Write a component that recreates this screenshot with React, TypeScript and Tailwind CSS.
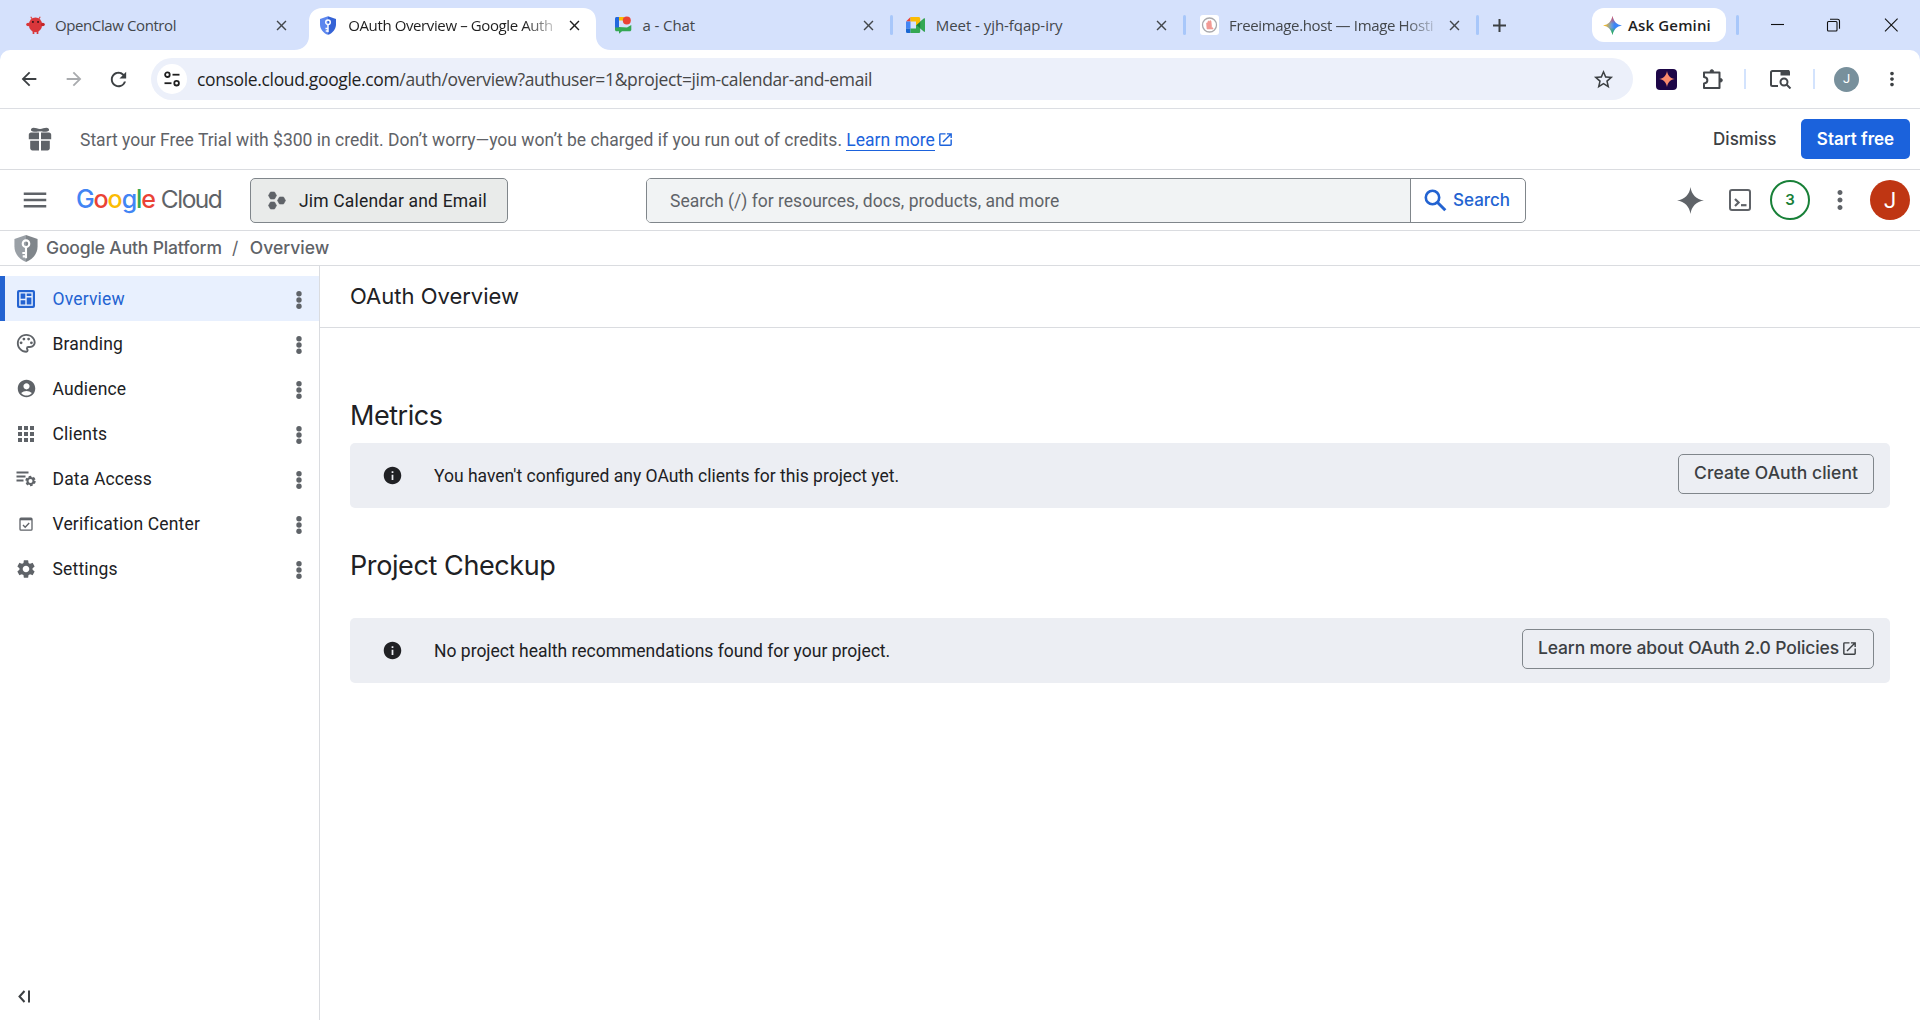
import React from 'react';
import {
  MdAccountCircle,
  MdApps,
  MdArrowBack,
  MdArrowForward,
  MdClose,
  MdInfo,
  MdMenu,
  MdMoreVert,
  MdOpenInNew,
  MdOutlinePalette,
  MdOutlineStarBorder,
  MdRefresh,
  MdSettings,
} from 'react-icons/md';

const segoe = "font-['Open_Sans','Noto_Sans',sans-serif]";
const gsans = "font-['Inter','Roboto',sans-serif]";
const roboto = "font-['Roboto',sans-serif]";

const ClawIcon = () => (
  <svg width="19" height="19" viewBox="0 0 20 20">
    <path d="M6.500 3 5 .8M13.500 3 15 .8" stroke="#e0433f" strokeWidth="1.200" />
    <path d="M7 15v4h1.800v-4zM11.200 15v4H13v-4z" fill="#d9363a" />
    <ellipse cx="10" cy="9.300" rx="7" ry="7.800" fill="#d9363a" />
    <ellipse cx="2.300" cy="9" rx="2.100" ry="1.800" fill="#d9363a" />
    <ellipse cx="17.700" cy="9" rx="2.100" ry="1.800" fill="#c42428" />
    <circle cx="7.300" cy="6.200" r="1" fill="#1c1014" />
    <circle cx="12.700" cy="6.200" r="1" fill="#1c1014" />
  </svg>
);

const ShieldIcon = ({ left, right, width, height }: { left: string; right: string; width: number; height: number }) => (
  <svg width={width} height={height} viewBox="0 0 24 28" className="shrink-0">
    <path d="M12 0 0 4.200V12c0 7.400 5 13.400 12 16z" fill={left} />
    <path d="M12 0l12 4.200V12c0 7.400-5 13.400-12 16z" fill={right} />
    <circle cx="12" cy="9" r="3.400" fill="none" stroke="#fff" strokeWidth="2.200" />
    <path d="M12 12.500V24M12 18.600H8.200M12 22.200H8.600" stroke="#fff" strokeWidth="2.200" fill="none" />
  </svg>
);

const ChatIcon = () => (
  <svg width="18" height="18" viewBox="0 0 18 18">
    <path d="M2.500 1H5v12H1V2.500C1 1.700 1.700 1 2.500 1z" fill="#2268dd" />
    <path d="M5 1h5v3.500H5z" fill="#fbbc04" />
    <path d="M1 11.500h4V11l8 .5L17.300 9v4.700c0 .9-.6 1.500-1.500 1.500H8L5 17.800v-2.600H2.500c-.8 0-1.500-.6-1.500-1.500z" fill="#34a853" />
    <circle cx="12.800" cy="4.600" r="4" fill="#ea4335" />
  </svg>
);

const MeetIcon = () => (
  <svg width="19" height="16" viewBox="0 0 19 16">
    <path d="M4.500 0v4.500H0z" fill="#ea4335" />
    <path d="M4.500 0h8c1 0 1.700.7 1.700 1.600V8H10V4.500H4.500z" fill="#fbbc04" />
    <path d="M0 4.500h4.500v7H0z" fill="#4285f4" />
    <path d="M0 11.500h4.500V16H1.600C.7 16 0 15.300 0 14.400z" fill="#1967d2" />
    <path d="M4.500 11.500H10V8h4.200v6.400c0 .9-.7 1.600-1.700 1.600h-8z" fill="#34a853" />
    <path d="M10.500 8 18 1.600c.4-.3 1 0 1 .5v11.800c0 .5-.6.8-1 .5z" fill="#188038" />
    <path d="M14.200 4.800 18 1.600c.4-.3 1 0 1 .5v11.800c0 .5-.6.8-1 .5l-3.800-3.200z" fill="#34a853" />
  </svg>
);

const ImageHostIcon = () => (
  <svg width="19" height="20" viewBox="0 0 19 20">
    <rect width="19" height="20" rx="3" fill="#fff" />
    <circle cx="9.500" cy="10" r="7" fill="none" stroke="#a9a9ad" strokeWidth="1.300" />
    <path d="M6.500 8 8 7.500V6h1v1l1-1.500 1 .5.700 6.500 1.300.5v1h-6z" fill="#f29a94" stroke="#f29a94" strokeWidth=".6" />
  </svg>
);

const Spark = ({ size, fill }: { size: number; fill: string }) => (
  <svg width={size} height={size} viewBox="0 0 24 24">
    <path d="M12 0c.9 6.800 5.200 11.100 12 12-6.800.9-11.100 5.200-12 12-.9-6.800-5.200-11.100-12-12C6.800 11.100 11.100 6.800 12 0z" fill={fill} />
  </svg>
);

const GeminiIcon = () => (
  <svg width="19" height="19" viewBox="0 0 24 24">
    <defs>
      <linearGradient id="gem" x1="0" y1="12" x2="24" y2="12" gradientUnits="userSpaceOnUse">
        <stop offset=".1" stopColor="#f6b91f" />
        <stop offset=".45" stopColor="#6a9bd8" />
        <stop offset=".6" stopColor="#3b86f7" />
      </linearGradient>
      <linearGradient id="gemTop" x1="12" y1="0" x2="12" y2="24" gradientUnits="userSpaceOnUse">
        <stop offset="0" stopColor="#f0434a" />
        <stop offset=".42" stopColor="#f0434a" stopOpacity="0" />
        <stop offset=".6" stopColor="#2bb24c" stopOpacity="0" />
        <stop offset=".9" stopColor="#2bb24c" />
      </linearGradient>
    </defs>
    <path d="M12 0c1 6.500 5.500 11 12 12-6.500 1-11 5.500-12 12-1-6.500-5.500-11-12-12C6.500 11 11 6.500 12 0z" fill="url(#gem)" />
    <path d="M12 0c1 6.500 5.500 11 12 12-6.500 1-11 5.500-12 12-1-6.500-5.500-11-12-12C6.500 11 11 6.500 12 0z" fill="url(#gemTop)" />
  </svg>
);

const tabs = [
  { title: 'OpenClaw Control', icon: <ClawIcon />, tracking: 'tracking-[-0.4px]' },
  {
    title: 'OAuth Overview – Google Auth',
    icon: <ShieldIcon left="#5c86ee" right="#3563d6" width={16} height={19} />,
    tracking: 'tracking-[-0.39px]',
    active: true,
    faded: true,
  },
  { title: 'a - Chat', icon: <ChatIcon />, tracking: 'tracking-[-0.1px]', divider: true },
  { title: 'Meet - yjh-fqap-iry', icon: <MeetIcon />, tracking: 'tracking-[-0.05px]', divider: true },
  { title: 'Freeimage.host — Image Hosti', icon: <ImageHostIcon />, tracking: 'tracking-[-0.35px]', divider: true, faded: true },
];

const TabStrip = () => (
  <div className="flex h-[50px] bg-[#d5e1fc] pl-[15px]">
    {tabs.map((tab) => (
      <div key={tab.title} className="relative h-[50px] w-[293.25px] shrink-0">
        {tab.active && (
          <svg className="absolute top-2 -left-3.5" width="317" height="42" viewBox="0 0 317 42">
            <path d="M0 42C9 42 15 36 15 28V13C15 5 21 0 28 0H289C297 0 302 5 302 13V28C302 36 308 42 317 42z" fill="#fff" />
          </svg>
        )}
        <div className={`relative flex h-[50px] items-center ${tab.divider ? 'pl-[11px]' : 'pl-[10px]'}`}>
          <span className="flex w-5 shrink-0 justify-center">{tab.icon}</span>
          <span className={`ml-[10px] flex shrink-0 ${tab.divider ? 'w-[208px]' : 'w-[209px]'}`}>
            <span
              className={`${segoe} whitespace-nowrap text-[15px] leading-5 ${tab.tracking} ${
                tab.active ? 'text-[#1f1f1f]' : 'text-[#43474b]'
              } ${tab.faded ? '[mask-image:linear-gradient(to_right,#000_86%,rgb(0_0_0/.25))]' : ''}`}
            >
              {tab.title}
            </span>
          </span>
          <MdClose className={`ml-[9px] shrink-0 text-[17px] ${tab.active ? 'text-[#1f1f1f]' : 'text-[#43474b]'}`} />
        </div>
        {tab.divider && <div className="absolute top-[15px] right-[2px] h-5 w-[3px] rounded-full bg-[#a8c7fa]" />}
      </div>
    ))}
    <div className="flex flex-1 items-center">
      <svg width="15" height="15" viewBox="0 0 15 15" className="ml-[11px]">
        <path d="M7.500 1v13M1 7.500h13" stroke="#3c4043" strokeWidth="2" />
      </svg>
      <div className="ml-[84.75px] flex h-[34px] w-[134px] items-center rounded-[12px] bg-white pl-[11px]">
        <GeminiIcon />
        <span className={`${segoe} ml-[6px] whitespace-nowrap text-[15px] font-semibold tracking-[0.15px] text-[#1f1f1f]`}>Ask Gemini</span>
      </div>
      <div className="ml-[10px] h-5 w-[3px] rounded-full bg-[#a8c7fa]" />
      <svg width="130" height="14" viewBox="0 0 130 14" className="ml-[32px]" fill="none" stroke="#111" strokeWidth="1.100">
        <path d="M0 6.500h13" />
        <rect x="56.500" y="3.500" width="9.500" height="9.500" rx="1" />
        <path d="M59 1.200h7.500a2 2 0 0 1 2 2v7.500" />
        <path d="M114 .7l12.600 12.600M126.600.7 114 13.300" />
      </svg>
    </div>
  </div>
);

const Toolbar = () => (
  <div className="h-[59px] bg-[#d5e1fc]">
    <div className="flex h-[59px] items-center rounded-t-[10px] border-b border-[#dcdee3] bg-white pl-[17.5px]">
      <MdArrowBack className="text-[22px] text-[#3c4043]" />
      <MdArrowForward className="ml-[23.5px] text-[22px] text-[#a9abae]" />
      <MdRefresh className="ml-[22px] text-[23px] text-[#3c4043]" />
      <div className="ml-[21px] flex h-[42px] w-[1482px] items-center rounded-full bg-[#ecf0fa] pl-[6px]">
        <span className="flex size-[30px] items-center justify-center rounded-full bg-white">
          <svg width="16" height="16" viewBox="0 0 16 16" fill="none" stroke="#1f1f1f" strokeWidth="1.800">
            <circle cx="3.400" cy="3.700" r="2.300" />
            <path d="M8.500 3.700H15.500" />
            <circle cx="12.600" cy="12.200" r="2.300" />
            <path d="M.5 12.200H7.500" />
          </svg>
        </span>
        <span className={`${segoe} ml-[10px] flex-1 whitespace-nowrap text-[17.500px] leading-6 tracking-[-0.35px] text-[#474747]`}>
          <span className="text-[#1f1f1f]">console.cloud.google.com</span>/auth/overview?authuser=1&amp;project=jim-calendar-and-email
        </span>
        <MdOutlineStarBorder className="mr-[18px] text-[23px] text-[#3c4043]" />
      </div>
      <span className="ml-[23px] flex size-[21px] items-center justify-center rounded-[4px] bg-[#1d0647]">
        <Spark size={16} fill="#f98a6c" />
      </span>
      <svg width="22" height="22" viewBox="0 0 22 22" className="ml-[25px]" fill="none" stroke="#43474b" strokeWidth="2">
        <path d="M2 4.500h15.500v15.500H2v-4.500c4.500-.5 4.500-6 0-6.500z" strokeLinejoin="round" />
        <path d="M8 3.500a1.800 1.800 0 0 1 3.600 0zM18.500 10.500a1.800 1.800 0 0 1 0 3.600z" fill="#43474b" strokeWidth="1" />
      </svg>
      <div className="ml-[20px] h-5 w-[2px] bg-[#d3e3fd]" />
      <svg width="23" height="20" viewBox="0 0 23 20" className="ml-[23px]" fill="none" stroke="#43474b" strokeWidth="2">
        <path d="M9 17H3.500A1.500 1.500 0 0 1 2 15.500v-12A1.500 1.500 0 0 1 3.500 2H20" />
        <path d="M11.500 1H19a2 2 0 0 1 2 2v3.500h-9.500z" fill="#43474b" stroke="none" />
        <circle cx="15" cy="13" r="3.500" />
        <path d="M17.500 15.500 21.500 19.500" />
      </svg>
      <div className="ml-[21px] h-5 w-[2px] bg-[#d3e3fd]" />
      <span className={`${roboto} ml-[19px] flex size-[25px] items-center justify-center rounded-full bg-[#78909c] text-[13px] text-white`}>J</span>
      <MdMoreVert className="ml-[22px] text-[22px] text-[#3c4043]" />
    </div>
  </div>
);

const TrialBanner = () => (
  <div className="flex h-[61px] items-center border-b border-[#dadce0] pr-[10px] pl-[28px]">
    <svg width="24" height="24" viewBox="0 0 24 24" fill="#5f6368">
      <path d="M12 4.200C9.500 4.800 4.200 5.200 3 3.500 2.500 2.200 4 .8 5.500.8 8 .8 9.500 2 12 2s4-1.200 6.500-1.200c1.500 0 3 1.400 2.500 2.700-1.200 1.700-6.500 1.300-9 .7z" />
      <path d="M3 5.500h8v6.800H.8V7.700c0-1.200 1-2.200 2.200-2.200zM13 5.500h8c1.200 0 2.200 1 2.200 2.200v4.600H13zM2.200 13.800H11V23.500H4.400c-1.200 0-2.200-1-2.200-2.200zM13 13.800h8.800v7.500c0 1.200-1 2.200-2.200 2.200H13z" />
    </svg>
    <p className={`${roboto} mt-[2px] ml-[28px] flex-1 whitespace-nowrap text-[17.500px] text-[#5f6368]`}>
      <span>Start your Free Trial with $300 in credit. Don’t worry—you won’t be charged if you run out of credits. </span>
      <a className="border-b border-[#1b62dc] text-[#1b62dc]">Learn more</a>
      <MdOpenInNew className="mb-1 ml-[2px] inline text-[17px] text-[#1b62dc]" />
    </p>
    <span className={`${gsans} mt-[2px] mr-[24.5px] text-[17px] font-medium text-[#3c4043]`}>Dismiss</span>
    <button className={`${gsans} h-10 w-[109px] rounded-[5px] bg-[#1b62dc] pt-[2px] text-[17px] font-semibold text-white`}>Start free</button>
  </div>
);

const GoogleCloudLogo = () => (
  <span className={`${gsans} flex items-baseline text-[25px] leading-8`}>
    <span className="font-medium tracking-[-1.1px]">
      <span className="text-[#4285f4]">G</span>
      <span className="text-[#ea4335]">o</span>
      <span className="text-[#fbbc04]">o</span>
      <span className="text-[#4285f4]">g</span>
      <span className="text-[#34a853]">l</span>
      <span className="text-[#ea4335]">e</span>
    </span>
    <span className="ml-[6px] text-[24.500px] tracking-[-1.500px] text-[#5f6368]">Cloud</span>
  </span>
);

const ConsoleHeader = () => (
  <header className="flex h-[61px] items-center border-b border-[#dadce0] pl-[20px]">
    <MdMenu className="text-[30px] text-[#5f6368]" />
    <div className="mb-[2px] ml-[26px] w-[174px]">
      <GoogleCloudLogo />
    </div>
    <button className="flex h-[45px] w-[258px] items-center rounded-[5px] border border-[#80868b] bg-[#e9ebea] pl-[17px]">
      <svg width="18" height="19" viewBox="0 0 18 19" fill="#5f6368">
        <path d="M2.500 1h4l2 3.500-2 3.500h-4l-2-3.500zM2.500 11h4l2 3.500-2 3.500h-4l-2-3.500zM11.500 6h4l2 3.500-2 3.500h-4l-2-3.500z" stroke="#5f6368" strokeWidth=".6" />
      </svg>
      <span className={`${roboto} mt-[2px] ml-[13px] whitespace-nowrap text-[17.500px] tracking-[0.17px] text-[#202124]`}>Jim Calendar and Email</span>
    </button>
    <div className="ml-[138px] flex h-[45px] w-[880px] overflow-hidden rounded-[5px] border border-[#80868b]">
      <div className={`${roboto} flex w-[764px] items-center border-r border-[#80868b] bg-[#f1f3f4] pl-[23px] text-[17.500px] text-[#5f6368]`}>
        <span className="mt-[2px]">Search (/) for resources, docs, products, and more</span>
      </div>
      <div className="flex items-center pl-[13px] text-[#2363d1]">
        <svg width="23" height="23" viewBox="0 0 23 23" fill="none" stroke="#2363d1">
          <circle cx="8.500" cy="8.500" r="6.700" strokeWidth="2.600" />
          <path d="M13.300 13.300 21.300 21.300" strokeWidth="3" />
        </svg>
        <span className={`${gsans} mt-[2px] ml-[6px] text-[17px] font-medium`}>Search</span>
      </div>
    </div>
    <div className="flex flex-1 items-center justify-end pr-[10px] text-[#5f6368]">
      <Spark size={27} fill="#5f6368" />
      <svg width="24" height="24" viewBox="0 0 24 24" className="ml-[24px]" fill="none" stroke="#5f6368">
        <rect x="2" y="2" width="20" height="20" rx="2" strokeWidth="2" />
        <path d="M7 11l3.600 3.500L7 18" strokeWidth="2.200" />
        <path d="M13 17.200h5.500" strokeWidth="2.200" />
      </svg>
      <span className={`${gsans} ml-[18px] flex size-10 items-center justify-center rounded-full border-[2.500px] border-[#188038] text-[15px] font-semibold text-[#188038]`}>3</span>
      <MdMoreVert className="ml-[15px] text-[30px]" />
      <span className={`${roboto} ml-[15px] flex size-10 items-center justify-center rounded-full bg-[#bf3613] text-[22px] text-white`}>J</span>
    </div>
  </header>
);

const Breadcrumb = () => (
  <div className={`${gsans} flex h-[35px] items-center border-b border-[#dadce0] pl-[14px] text-[17.500px] font-medium text-[#5f6368]`}>
    <ShieldIcon left="#9aa0a6" right="#80868b" width={24} height={27} />
    <span className="ml-[8px] w-[176px] whitespace-nowrap tracking-[-0.15px]">Google Auth Platform</span>
    <span className="ml-[10px] font-normal">/</span>
    <span className="ml-[11.5px]">Overview</span>
  </div>
);

const OverviewIcon = () => (
  <svg width="18" height="18" viewBox="0 0 18 18">
    <rect width="18" height="18" rx="2" fill="#2363d1" />
    <rect x="2.200" y="2.200" width="13.600" height="13.600" fill="#e8f0fe" />
    <path d="M3.600 3.600h4.700v5.200H3.600zM9.700 3.600h4.700v2.500H9.700zM9.700 7.500h4.700v6.900H9.700zM3.600 10.200h4.700v4.200H3.600z" fill="#2363d1" />
  </svg>
);

const DataAccessIcon = () => (
  <svg width="20" height="17" viewBox="0 0 20 17">
    <path d="M.5 2.500h12M.5 6.500h9M.5 10.500h7" stroke="#5f6368" strokeWidth="1.800" />
    <circle cx="14.500" cy="11" r="3" fill="none" stroke="#5f6368" strokeWidth="2" />
    <circle cx="14.500" cy="11" r="4.400" fill="none" stroke="#5f6368" strokeWidth="1.600" strokeDasharray="2.600 2.007" />
  </svg>
);

const VerificationIcon = () => (
  <svg width="14" height="14" viewBox="0 0 14 14" fill="none" stroke="#5f6368">
    <rect x="1" y="1.200" width="12" height="12" rx="1" strokeWidth="1.300" />
    <path d="M1 2.200h12" strokeWidth="2.200" />
    <path d="M4 8l2.200 2.200L10.200 6" strokeWidth="1.400" />
  </svg>
);

const navItems = [
  { name: 'Overview', icon: <OverviewIcon /> },
  { name: 'Branding', icon: <MdOutlinePalette className="text-[22.500px]" /> },
  { name: 'Audience', icon: <MdAccountCircle className="text-[21px]" /> },
  { name: 'Clients', icon: <MdApps className="text-[24px]" /> },
  { name: 'Data Access', icon: <DataAccessIcon /> },
  { name: 'Verification Center', icon: <VerificationIcon /> },
  { name: 'Settings', icon: <MdSettings className="text-[22px]" /> },
];

const Sidebar = () => (
  <aside className="flex w-[320px] shrink-0 flex-col justify-between border-r border-[#dadce0] pt-[10px]">
    <nav>
      {navItems.map((item, i) => (
        <div
          key={item.name}
          className={`${roboto} flex h-[45px] items-center border-l-[5px] text-[17.500px] ${
            i === 0 ? 'border-[#2363d1] bg-[#e8f0fe] text-[#2363d1]' : 'border-transparent text-[#202124]'
          }`}
        >
          <span className="ml-[9px] flex w-6 items-center justify-center text-[#5f6368]">{item.icon}</span>
          <span className="mt-[2px] ml-[14.5px] flex-1 tracking-[0.16px]">{item.name}</span>
          <svg width="6" height="20" viewBox="0 0 6 20" fill="#5f6368" className="mt-[3px] mr-[17px]">
            <circle cx="3" cy="3.800" r="2.700" />
            <circle cx="3" cy="10" r="2.700" />
            <circle cx="3" cy="16.200" r="2.700" />
          </svg>
        </div>
      ))}
    </nav>
    <svg width="13" height="13" viewBox="0 0 13 13" className="mb-[17px] ml-[18px]" fill="none" stroke="#3c4043" strokeWidth="2">
      <path d="M6.500 1 1.500 6.500l5 5.500M11 .5v12" />
    </svg>
  </aside>
);

const Notice = ({ children, action }: { children: React.ReactNode; action: React.ReactNode }) => (
  <div className="flex h-[65px] items-center rounded-[5px] bg-[#eceef3] pr-[16px] pl-[32px]">
    <MdInfo className="text-[21px] text-[#202124]" />
    <span className={`${roboto} mt-[2px] ml-[31px] flex-1 text-[17.500px] text-[#202124]`}>{children}</span>
    <button className={`${gsans} mb-[3px] flex h-10 items-center rounded-[5px] border border-[#80868b] px-[15px] pb-[2px] text-[17.500px] font-medium text-[#3c4043]`}>
      {action}
    </button>
  </div>
);

export default function App() {
  return (
    <div className="flex h-[1020px] w-[1920px] flex-col overflow-hidden bg-white">
      <TabStrip />
      <Toolbar />
      <TrialBanner />
      <ConsoleHeader />
      <Breadcrumb />
      <div className="flex flex-1">
        <Sidebar />
        <main className={`${gsans} flex-1 text-[#202124]`}>
          <div className="flex h-[62px] items-center border-b border-[#dadce0] pl-[30px]">
            <h1 className="text-[22px]">OAuth Overview</h1>
          </div>
          <div className="pt-[68px] pr-[30px] pl-[30px]">
            <h2 className="h-[47px] text-[27px] leading-10 tracking-[-0.45px]">Metrics</h2>
            <Notice action={<span className="tracking-[0.05px]">Create OAuth client</span>}>
              You haven't configured any OAuth clients for this project yet.
            </Notice>
            <h2 className="mt-[38px] mb-[32px] text-[27px] leading-10 tracking-[-0.4px]">Project Checkup</h2>
            <Notice
              action={
                <>
                  <span className="tracking-[-0.13px]">Learn more about OAuth 2.0 Policies</span>
                  <MdOpenInNew className="ml-[2px] text-[17px]" />
                </>
              }
            >
              No project health recommendations found for your project.
            </Notice>
          </div>
        </main>
      </div>
    </div>
  );
}
